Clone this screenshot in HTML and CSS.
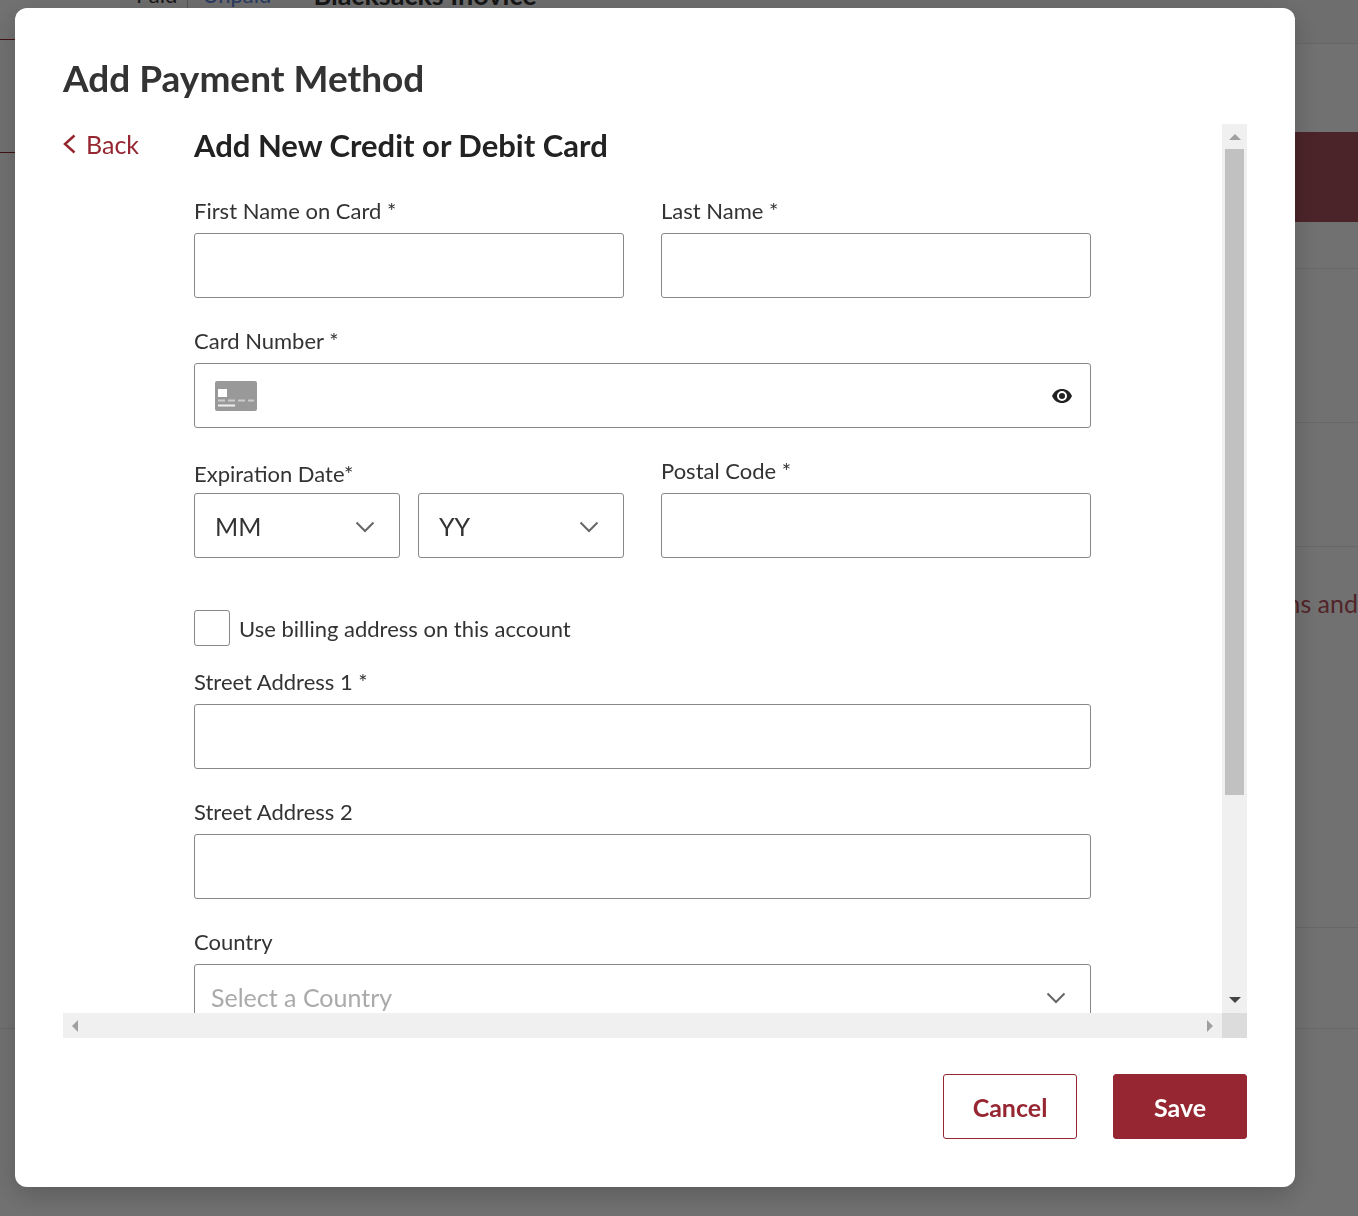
FILE: index.html
```html
<!DOCTYPE html>
<html lang="en">
<head>
<meta charset="UTF-8">
<meta name="viewport" content="width=device-width, initial-scale=1.0">
<title>Add Payment Method</title>
<link rel="stylesheet" href="styles.css">
</head>
<body>
  <div class="page">
    <div class="sidebar">
      <div class="side-top"></div>
      <div class="side-item"></div>
      <div class="side-rest"></div>
    </div>
    <main class="content">
      <div class="toolbar">
        <span class="paid">Paid</span>
        <a class="unpaid" href="#">Unpaid</a>
        <b class="invoice-name">Blacksacks Inovice</b>
      </div>
      <div class="row row-search"></div>
      <div class="banner"></div>
      <div class="row row-head"></div>
      <div class="row row-summary"></div>
      <div class="row row-total"></div>
      <div class="row row-terms"><a href="#">Terms and</a></div>
      <div class="row row-foot"></div>
    </main>
  </div>

  <div class="backdrop">
    <div class="modal" role="dialog" aria-labelledby="modalTitle">
      <h1 id="modalTitle">Add Payment Method</h1>

      <div class="scroll-box">
        <div class="pane">
          <a class="back" href="#">
            <svg width="13" height="20" viewBox="0 0 13 20" fill="none" stroke="currentColor" stroke-width="2.500"><path d="M11.500 1.500 2 10l9.500 8.500"/></svg>
            Back
          </a>
          <form id="cardForm">
            <h2>Add New Credit or Debit Card</h2>
            <div class="columns">
              <div class="field">
                <label for="firstName">First Name on Card *</label>
                <input type="text" id="firstName">
              </div>
              <div class="field">
                <label for="lastName">Last Name *</label>
                <input type="text" id="lastName">
              </div>
            </div>

            <div class="field">
              <label for="cardNumber">Card Number *</label>
              <div class="card-box">
                <svg width="42" height="30" viewBox="0 0 42 30">
                  <rect width="42" height="30" rx="2" fill="#999"/>
                  <rect x="3" y="8" width="9" height="8" fill="#fff"/>
                  <path d="M3 19.500h7M13 19.500h7M23 19.500h7M33 19.500h6" stroke="#ccc" stroke-width="2"/>
                  <path d="M3 24.500h17" stroke="#eee" stroke-width="2"/>
                </svg>
                <input type="text" id="cardNumber">
                <button type="button" class="eye" aria-label="Show card number">
                  <svg width="22" height="16" viewBox="0 0 22 16">
                    <path d="M1 8C3 3.500 6.500 1 11 1s8 2.500 10 7c-2 4.500-5.500 7-10 7S3 12.500 1 8z" fill="#222"/>
                    <circle cx="11" cy="8" r="4" fill="none" stroke="#fff" stroke-width="2"/>
                  </svg>
                </button>
              </div>
            </div>

            <div class="columns">
              <div class="field expiry">
                <label for="month">Expiration Date*</label>
                <div class="expiry-selects">
                  <div class="select-box">
                    <select id="month"><option>MM</option></select>
                    <svg width="20" height="12" viewBox="0 0 20 12" fill="none" stroke="#666" stroke-width="2"><path d="M1.500 1.500 10 10l8.500-8.500"/></svg>
                  </div>
                  <div class="select-box">
                    <select id="year" aria-label="Expiration year"><option>YY</option></select>
                    <svg width="20" height="12" viewBox="0 0 20 12" fill="none" stroke="#666" stroke-width="2"><path d="M1.500 1.500 10 10l8.500-8.500"/></svg>
                  </div>
                </div>
              </div>
              <div class="field">
                <label for="postal">Postal Code *</label>
                <input type="text" id="postal">
              </div>
            </div>

            <div class="check">
              <input type="checkbox" id="useBilling">
              <label for="useBilling">Use billing address on this account</label>
            </div>

            <div class="field">
              <label for="street1">Street Address 1 *</label>
              <input type="text" id="street1">
            </div>
            <div class="field">
              <label for="street2">Street Address 2</label>
              <input type="text" id="street2">
            </div>
            <div class="field">
              <label for="country">Country</label>
              <div class="select-box country">
                <select id="country"><option>Select a Country</option></select>
                <svg width="20" height="12" viewBox="0 0 20 12" fill="none" stroke="#666" stroke-width="2"><path d="M1.500 1.500 10 10l8.500-8.500"/></svg>
              </div>
            </div>
          </form>
        </div>
        <div class="bar-v">
          <svg class="muted" width="12" height="6" viewBox="0 0 12 6"><path d="M6 0l6 6H0z"/></svg>
          <div class="track"><div class="thumb"></div></div>
          <svg width="12" height="6" viewBox="0 0 12 6"><path d="M0 0h12L6 6z"/></svg>
        </div>
        <div class="bar-h">
          <svg class="muted" width="6" height="12" viewBox="0 0 6 12"><path d="M6 0v12L0 6z"/></svg>
          <svg class="muted" width="6" height="12" viewBox="0 0 6 12"><path d="M0 0l6 6-6 6z"/></svg>
        </div>
        <div class="bar-corner"></div>
      </div>

      <div class="actions">
        <button type="button" class="cancel">Cancel</button>
        <button type="submit" class="save" form="cardForm">Save</button>
      </div>
    </div>
  </div>
</body>
</html>
```
FILE: styles.css
```css
* {
  box-sizing: border-box;
}

body {
  margin: 0;
  height: 100vh;
  overflow: hidden;
  font-family: Lato, sans-serif;
  font-size: 22px;
  color: #333;
}

a {
  text-decoration: none;
}

/* page behind the dialog */
.page {
  display: flex;
  height: 100vh;
  background-color: #fafafa;
}

.sidebar {
  width: 120px;
}

.side-top {
  height: 40px;
  border-bottom: 1px solid #962631;
}

.side-item {
  height: 113px;
  border-bottom: 1px solid #962631;
}

.side-rest {
  height: 876px;
  border-bottom: 1px solid #e4e4e4;
}

.content {
  flex: 1;
}

.toolbar {
  display: flex;
  align-items: flex-start;
  height: 44px;
  padding-left: 16px;
  background-color: #f4f4f4;
  border-bottom: 1px solid #e4e4e4;
}

.toolbar > * {
  margin-top: -18px;
  line-height: 26px;
}

.unpaid {
  margin-left: 10px;
  padding-left: 14px;
  border-left: 1px solid #bbb;
  color: #5a7fd8;
}

.invoice-name {
  margin-left: 42px;
  font-size: 27px;
}

.row {
  border-bottom: 1px solid #e4e4e4;
}

.row-search {
  height: 88px;
  border-bottom: none;
}

.banner {
  height: 90px;
  background-color: #a7505c;
}

.row-head {
  height: 47px;
}

.row-summary {
  height: 154px;
}

.row-total {
  height: 124px;
}

.row-terms {
  height: 381px;
  padding-top: 41px;
  text-align: right;
  font-size: 25px;
}

.row-terms a {
  color: #b5505c;
}

.row-foot {
  height: 101px;
}

/* dialog */
.backdrop {
  position: fixed;
  inset: 0;
  display: flex;
  padding: 8px 63px 29px 15px;
  background-color: rgba(0, 0, 0, 0.55);
}

.modal {
  flex: 1;
  display: flex;
  flex-direction: column;
  min-width: 0;
  padding: 48px;
  border-radius: 12px;
  background-color: white;
  box-shadow: 0 8px 28px rgba(0, 0, 0, 0.2);
}

h1 {
  margin: 0 0 24px;
  font-size: 37px;
  line-height: 44px;
}

.scroll-box {
  flex: 1;
  display: grid;
  grid-template-columns: 1fr 25px;
  grid-template-rows: 1fr 25px;
  min-height: 0;
}

.pane {
  display: flex;
  min-height: 0;
  padding-right: 131px;
  overflow: hidden;
}

.back {
  display: flex;
  align-items: center;
  gap: 10px;
  width: 131px;
  height: 40px;
  font-size: 25px;
  color: #962631;
}

form {
  flex: 1;
}

h2 {
  margin: 0 0 33px;
  font-size: 31px;
  line-height: 42px;
  color: #222;
}

.columns {
  display: grid;
  grid-template-columns: 1fr 1fr;
  gap: 37px;
}

.field {
  display: flex;
  flex-direction: column;
  gap: 10px;
  margin-bottom: 31px;
}

.field label {
  line-height: 24px;
}

.expiry {
  gap: 4px;
}

.field.expiry label {
  line-height: 30px;
}

input,
select,
.card-box {
  width: 100%;
  height: 65px;
  margin: 0;
  border: 1px solid #888;
  border-radius: 3px;
  background-color: white;
  font-family: inherit;
  font-size: 25px;
  color: #333;
}

.card-box {
  display: flex;
  align-items: center;
  padding: 0 17px 0 20px;
}

.card-box svg {
  flex-shrink: 0;
}

.card-box input {
  height: 60px;
  border: none;
}

.eye {
  display: flex;
  padding: 0;
  border: none;
  background: none;
}

.expiry-selects {
  display: grid;
  grid-template-columns: 1fr 1fr;
  gap: 18px;
}

.select-box {
  position: relative;
}

.select-box select {
  padding: 0 20px;
  appearance: none;
}

.select-box svg {
  position: absolute;
  top: 28px;
  right: 25px;
  pointer-events: none;
}

.country select {
  padding: 0 16px;
  color: #aaa;
}

.check {
  display: flex;
  align-items: center;
  gap: 9px;
  margin: 52px 0 24px;
}

/* the row above already leaves its own space */
.columns + .check {
  margin-top: 21px;
}

.check input {
  width: 36px;
  height: 36px;
  appearance: none;
}

/* scrollbars */
.bar-v,
.bar-h {
  display: flex;
  justify-content: space-between;
  align-items: center;
  background-color: #f0f0f0;
  fill: #444;
}

.bar-v {
  flex-direction: column;
  padding: 10px 3px;
  gap: 9px;
}

.bar-h {
  padding: 0 9px;
}

.muted {
  fill: #a0a0a0;
}

.track {
  flex: 1;
  width: 100%;
}

.thumb {
  height: 77%;
  background-color: #c1c1c1;
}

.bar-corner {
  background-color: #dcdcdc;
}

.actions {
  display: flex;
  justify-content: flex-end;
  gap: 36px;
  margin-top: 36px;
}

.actions button {
  width: 134px;
  height: 65px;
  border: 1px solid #962631;
  border-radius: 3px;
  font-family: inherit;
  font-size: 25px;
  font-weight: bold;
}

.actions .cancel {
  background-color: white;
  color: #962631;
}

.actions .save {
  background-color: #962631;
  color: white;
}
```
